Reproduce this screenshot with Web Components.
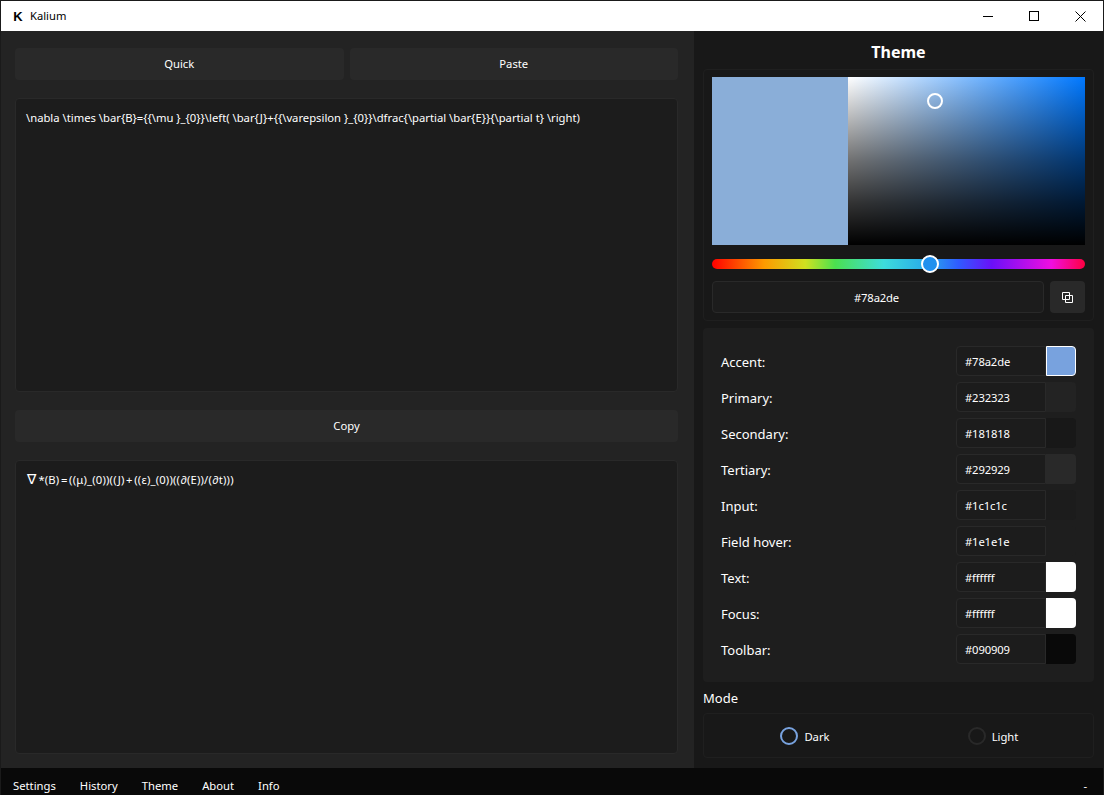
<!DOCTYPE html>
<html>
<head>
<meta charset="utf-8">
<title>Kalium</title>
<style>
  html, body { margin: 0; height: 100%; background: #181818; overflow: hidden; }
  body { font: 11.25px "Noto Sans", "Open Sans", sans-serif; color: #fff; }
</style>
</head>
<body>
<kalium-app></kalium-app>

<script>
class KaliumTitlebar extends HTMLElement {
  connectedCallback() {
    const root = this.attachShadow({ mode: "open" });
    root.innerHTML = `
      <style>
        :host { display: flex; align-items: center; height: 30px; background: #fff; color: #000; flex: none; }
        .logo { width: 14px; margin-left: 10px; margin-right: 5px; font: 900 13px "Liberation Sans", sans-serif; text-align: center; }
        .name { flex: 1; font-size: 11.2px; padding-bottom: 2px; }
        .btn { width: 46px; height: 30px; display: flex; align-items: center; justify-content: center; }
      </style>
      <span class="logo">K</span>
      <span class="name">Kalium</span>
      <span class="btn"><svg width="10" height="10"><path d="M0 5.5H10" stroke="#000"/></svg></span>
      <span class="btn"><svg width="10" height="10"><rect x=".5" y=".5" width="9" height="9" fill="none" stroke="#000"/></svg></span>
      <span class="btn"><svg width="11" height="11"><path d="M.5 .5L10.5 10.5M10.5 .5L.5 10.5" stroke="#000"/></svg></span>
    `;
  }
}

class KaliumButton extends HTMLElement {
  connectedCallback() {
    const root = this.attachShadow({ mode: "open" });
    root.innerHTML = `
      <style>
        :host { display: flex; flex: 1; height: 32px; box-sizing: border-box; padding-bottom: 1px; align-items: center; justify-content: center; background: #292929; border-radius: 4px; }
      </style>
      <slot></slot>
    `;
  }
}

class KaliumBox extends HTMLElement {
  connectedCallback() {
    const root = this.attachShadow({ mode: "open" });
    root.innerHTML = `
      <style>
        :host { display: block; height: 294px; box-sizing: border-box; background: #1c1c1c; border: 1px solid #292929; border-radius: 4px; padding: 10px; line-height: 18px; white-space: nowrap; overflow: hidden; }
      </style>
      <slot></slot>
    `;
  }
}

class KaliumPicker extends HTMLElement {
  connectedCallback() {
    const root = this.attachShadow({ mode: "open" });
    root.innerHTML = `
      <style>
        :host { display: flex; flex-direction: column; height: 252px; box-sizing: border-box; padding: 7px 8px; border: 1px solid #1f1f1f; border-radius: 4px; }
        .top { display: flex; height: 168px; }
        .preview { width: 136px; background: #8aaed8; }
        .sv { flex: 1; position: relative; background: linear-gradient(to bottom, transparent, rgba(0,0,0,.56) 50%, rgba(0,0,0,.8) 75%, #000), linear-gradient(to right, #fff, #0078ff); }
        .sv i { position: absolute; left: 79px; top: 16px; width: 12px; height: 12px; border: 2px solid #fff; border-radius: 50%; }
        .hue { position: relative; height: 10px; margin-top: 14px; border-radius: 5px; background: linear-gradient(to right, #ff0000 0%, #fd9a00 14%, #d0e020 25%, #4be04f 33%, #3ddcdc 46%, #28a8ea 58%, #2f5cff 66%, #6a10f8 75%, #f00ee0 91%, #ff0040 100%); }
        .hue i { position: absolute; left: 209px; top: -4px; width: 14px; height: 14px; background: #2090ee; border: 2px solid #fff; border-radius: 50%; }
        .hex { display: flex; gap: 6px; height: 32px; margin-top: 12px; }
        .field { flex: 1; display: flex; align-items: center; justify-content: center; padding-right: 3px; background: #1c1c1c; border: 1px solid #292929; border-radius: 4px; letter-spacing: -0.15px; }
        .copy { width: 35px; display: flex; align-items: center; justify-content: center; background: #292929; border-radius: 4px; }
      </style>
      <div class="top"><div class="preview"></div><div class="sv"><i></i></div></div>
      <div class="hue"><i></i></div>
      <div class="hex">
        <div class="field">#78a2de</div>
        <div class="copy"><svg width="11" height="11"><path d="M.5 .5H7.5V7.5H.5ZM3.5 3.5H10.5V10.5H3.5Z" fill="none" stroke="#fff"/></svg></div>
      </div>
    `;
  }
}

class KaliumColorRow extends HTMLElement {
  connectedCallback() {
    const color = this.getAttribute("color");
    const root = this.attachShadow({ mode: "open" });
    root.innerHTML = `
      <style>
        :host { display: flex; align-items: center; height: 30px; }
        .label { flex: 1; font-size: 13px; color: #fff; padding-top: 2px; }
        .input { width: 90px; height: 30px; box-sizing: border-box; display: flex; align-items: center; padding: 1px 0 0 8px; background: #1c1c1c; border: 1px solid #292929; border-radius: 4px 0 0 4px; letter-spacing: -0.15px; }
        .swatch { width: 30px; height: 30px; box-sizing: border-box; border-radius: 0 4px 4px 0; background: ${color}; }
        :host([active]) .swatch { border: 1px solid #fff; }
      </style>
      <span class="label"><slot></slot></span>
      <span class="input">${color}</span>
      <span class="swatch"></span>
    `;
  }
}

class KaliumRadio extends HTMLElement {
  connectedCallback() {
    const root = this.attachShadow({ mode: "open" });
    root.innerHTML = `
      <style>
        :host { display: flex; align-items: center; justify-content: center; gap: 6px; }
        i { width: 14px; height: 14px; border: 2px solid #292929; border-radius: 50%; }
        :host([checked]) i { border-color: #78a2de; }
        span { padding-top: 2px; }
      </style>
      <i></i><span><slot></slot></span>
    `;
  }
}

class KaliumToolbar extends HTMLElement {
  connectedCallback() {
    const root = this.attachShadow({ mode: "open" });
    root.innerHTML = `
      <style>
        :host { display: flex; align-items: center; gap: 24px; height: 27px; flex: none; background: #090909; padding: 7px 16px 0 12px; box-sizing: border-box; }
        .dash { margin-left: auto; }
      </style>
      <span>Settings</span><span>History</span><span>Theme</span><span>About</span><span>Info</span>
      <span class="dash">-</span>
    `;
  }
}

class KaliumApp extends HTMLElement {
  connectedCallback() {
    const rows = [
      ["Accent:", "#78a2de"], ["Primary:", "#232323"], ["Secondary:", "#181818"],
      ["Tertiary:", "#292929"], ["Input:", "#1c1c1c"], ["Field hover:", "#1e1e1e"],
      ["Text:", "#ffffff"], ["Focus:", "#ffffff"], ["Toolbar:", "#090909"]
    ];
    const root = this.attachShadow({ mode: "open" });
    root.innerHTML = `
      <style>
        :host { display: flex; flex-direction: column; height: 795px; box-sizing: border-box; border-top: 1px solid #1a1a1a; border-left: 1px solid #1a1a1a; border-right: 1px solid #1a1a1a; }
        .main { display: flex; flex: 1; min-height: 0; }
        .left { width: 693px; box-sizing: border-box; background: #232323; padding: 17px 16px 14px 14px; display: flex; flex-direction: column; gap: 18px; }
        .buttons { display: flex; gap: 6px; }
        .right { flex: 1; padding: 0 9px 0 9px; display: flex; flex-direction: column; }
        h1 { margin: 0; height: 38px; line-height: 42px; font-size: 16px; font-weight: 700; text-align: center; }
        .colors { margin-top: 7px; background: #1e1e1e; border-radius: 4px; padding: 18px; display: flex; flex-direction: column; gap: 6px; }
        .mode-label { height: 31px; line-height: 32px; font-size: 13px; }
        .mode { display: grid; grid-template-columns: 188px 188px; height: 45px; box-sizing: border-box; padding: 0 4px 0 7px; border: 1px solid #1f1f1f; border-radius: 4px; }
        .out { letter-spacing: 0.2px; }
        .nabla { font: 14px "DejaVu Sans", sans-serif; margin: 0 2px 0 1px; letter-spacing: 0; }
        .op { margin: 0 1.5px; }
      </style>
      <kalium-titlebar></kalium-titlebar>
      <div class="main">
        <div class="left">
          <div class="buttons"><kalium-button>Quick</kalium-button><kalium-button>Paste</kalium-button></div>
          <kalium-box>\\nabla \\times \\bar{B}={{\\mu }_{0}}\\left( \\bar{J}+{{\\varepsilon }_{0}}\\dfrac{\\partial \\bar{E}}{\\partial t} \\right)</kalium-box>
          <div class="buttons"><kalium-button>Copy</kalium-button></div>
          <kalium-box class="out"><span class="nabla">∇</span>*(B)<span class="op">=</span>((μ)_(0))((J)<span class="op">+</span>((ε)_(0))((∂(E))/(∂t)))</kalium-box>
        </div>
        <div class="right">
          <h1>Theme</h1>
          <kalium-picker></kalium-picker>
          <div class="colors">
            ${rows.map((r, i) => `<kalium-color-row color="${r[1]}"${i === 0 ? " active" : ""}>${r[0]}</kalium-color-row>`).join("")}
          </div>
          <div class="mode-label">Mode</div>
          <div class="mode"><kalium-radio checked>Dark</kalium-radio><kalium-radio>Light</kalium-radio></div>
        </div>
      </div>
      <kalium-toolbar></kalium-toolbar>
    `;
  }
}

customElements.define("kalium-titlebar", KaliumTitlebar);
customElements.define("kalium-button", KaliumButton);
customElements.define("kalium-box", KaliumBox);
customElements.define("kalium-picker", KaliumPicker);
customElements.define("kalium-color-row", KaliumColorRow);
customElements.define("kalium-radio", KaliumRadio);
customElements.define("kalium-toolbar", KaliumToolbar);
customElements.define("kalium-app", KaliumApp);
</script>
</body>
</html>
